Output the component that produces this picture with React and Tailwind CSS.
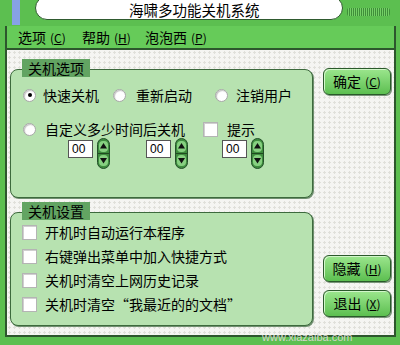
import React from 'react';

const RADIO = 'w-[13px] h-[13px] rounded-full bg-white border border-[#a8a8a8] shadow-[inset_1px_1px_1px_#c4c4c4] flex items-center justify-center shrink-0';
const CHECK = 'w-[15px] h-[15px] bg-white border border-[#b4b4b4] shadow-[inset_1px_1px_0_#d0d0d0] shrink-0';

function Radio({ checked }) {
  return (
    <span className={RADIO}>
      {checked && <span className="w-[4px] h-[4px] rounded-full bg-black" />}
    </span>
  );
}

function Spinner() {
  return (
    <svg width="13" height="31" viewBox="0 0 13 31" className="shrink-0">
      <rect x="0.5" y="0.5" width="12" height="30" rx="6" fill="#3e8c3e" stroke="#24502a" />
      <rect x="2" y="3" width="9" height="11" rx="4" fill="#86d080" />
      <path d="M6.5 5 L10 10.5 H3 Z" fill="#111" />
      <line x1="1" y1="15.5" x2="12" y2="15.5" stroke="#1f4a1f" />
      <rect x="2" y="17" width="9" height="11" rx="4" fill="#86d080" />
      <path d="M3 20 H10 L6.5 25.5 Z" fill="#111" />
    </svg>
  );
}

function SpinBox({ className }) {
  return (
    <div className={`flex items-start gap-[4px] ${className}`}>
      <div className="mt-[2px] w-[25px] h-[18px] bg-white border border-[#555] text-[12px] leading-[16px] pl-[3px] font-['Liberation_Sans',sans-serif]">
        00
      </div>
      <Spinner />
    </div>
  );
}

function Btn({ label, k, className }) {
  return (
    <div className={`w-[68px] h-[27px] rounded-[6px] border border-[#2b5a2b] bg-gradient-to-b from-[#9be68d] to-[#5cbf50] shadow-[inset_1px_1px_0_#d2f6ca,1px_1px_0_#7a957a] flex items-center justify-center text-[14px] ${className}`}>
      {label}
      <span className="text-[12px] ml-[4px]">
        (<u>{k}</u>)
      </span>
    </div>
  );
}

function Legend({ children }) {
  return (
    <div className="absolute left-[11px] -top-[11px] h-[18px] px-[6px] bg-[#62a462] text-[14px] leading-[18px]">
      {children}
    </div>
  );
}

export default function App() {
  return (
    <div className="w-[400px] h-[345px] bg-[#5cbf50] overflow-hidden relative text-black font-['Noto_Sans_CJK_SC','Noto_Sans',sans-serif]">
      {/* title bar */}
      <div className="h-[26px] flex items-start">
        <div className="ml-[12px] w-[8px] h-[25px] bg-[#86a2e6]" />
        <div className="ml-[15px] -mt-[4px] w-[308px] h-[24px] rounded-full bg-white border-[1.5px] border-[#2f5a2f] flex items-center pl-[93px] pt-[4px] text-[14.5px]">
          海啸多功能关机系统
        </div>
        <div className="ml-[4px] mt-[8px] w-[43px] h-[8px] rounded-[2px] bg-[repeating-linear-gradient(90deg,#3f8f3a_0_1px,#74d066_1px_2px)]" />
      </div>

      <div className="ml-[5px] mr-[4px] border-l-2 border-r-2 border-b-2 border-[#2d562d]">
        {/* menu */}
        <div className="h-[24px] bg-[#66cb59] border-b-2 border-[#2d562d] flex items-center pl-[11px] text-[14px]">
          <div className="w-[64px]">
            选项<span className="text-[12px] ml-[4px]">(<u>C</u>)</span>
          </div>
          <div className="w-[63px]">
            帮助<span className="text-[12px] ml-[4px]">(<u>H</u>)</span>
          </div>
          <div>
            泡泡西<span className="text-[12px] ml-[4px]">(<u>P</u>)</span>
          </div>
        </div>

        {/* body */}
        <div className="h-[285px] flex bg-[#f5f5f2] bg-[radial-gradient(circle,#e0e0da_1px,transparent_1.2px)] bg-[length:5px_5px]">
          <div className="ml-[3px] w-[303px]">
            <div className="relative mt-[19px] h-[129px] rounded-[8px] border border-[#3d6a3d] bg-[#b7e2b0] shadow-[1px_1px_0_#6f8f6f] pt-[17px] text-[14px]">
              <Legend>关机选项</Legend>
              <div className="h-[16px] flex items-center pl-[12px]">
                <div className="w-[90px] flex items-center gap-[7px]">
                  <Radio checked />
                  快速关机
                </div>
                <div className="w-[102px] flex items-center gap-[10px]">
                  <Radio />
                  重新启动
                </div>
                <div className="flex items-center gap-[8px]">
                  <Radio />
                  注销用户
                </div>
              </div>
              <div className="mt-[18px] h-[16px] flex items-center pl-[12px]">
                <div className="w-[180px] flex items-center gap-[9px]">
                  <Radio />
                  自定义多少时间后关机
                </div>
                <div className="flex items-center gap-[9px]">
                  <span className={CHECK} />
                  提示
                </div>
              </div>
              <div className="mt-[1px] flex items-start pl-[12px]">
                <SpinBox className="ml-[45px]" />
                <SpinBox className="ml-[36px]" />
                <SpinBox className="ml-[34px]" />
              </div>
            </div>

            <div className="relative mt-[14px] h-[114px] rounded-[8px] border border-[#3d6a3d] bg-[#b7e2b0] shadow-[1px_1px_0_#6f8f6f] pt-[7px] text-[14px]">
              <Legend>关机设置</Legend>
              {['开机时自动运行本程序', '右键弹出菜单中加入快捷方式', '关机时清空上网历史记录', '关机时清空“我最近的的文档”'].map((t) => (
                <div key={t} className="h-[24px] flex items-center gap-[8px] pl-[11px]">
                  <span className={CHECK} />
                  {t}
                </div>
              ))}
            </div>
          </div>

          <div className="ml-[10px] w-[68px] flex flex-col">
            <Btn label="确定" k="C" className="mt-[18px]" />
            <Btn label="隐藏" k="H" className="mt-[160px]" />
            <Btn label="退出" k="X" className="mt-[8px]" />
          </div>
        </div>
      </div>

      <div className="absolute left-[262px] top-[331px] text-[11px] leading-[12px] text-[#d4d4cc] font-['Liberation_Sans',sans-serif]">
        www.xiazaiba.com
      </div>
    </div>
  );
}
